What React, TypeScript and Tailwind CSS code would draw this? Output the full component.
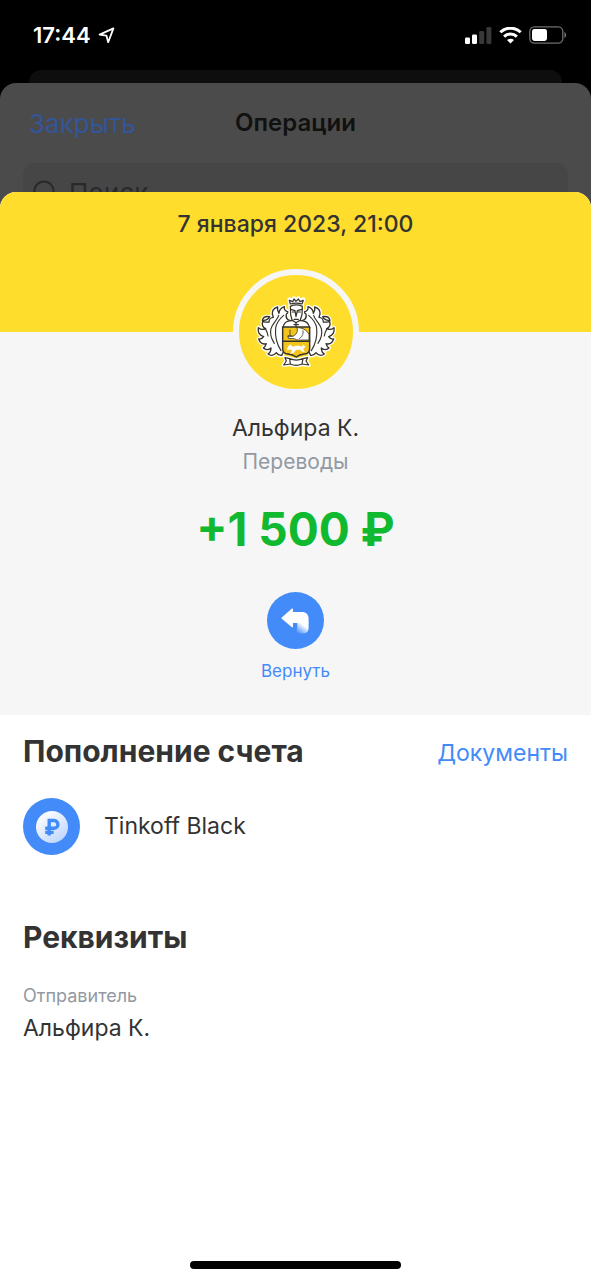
import {useState} from "react";

interface Operation {
    date: string;
    sender: string;
    category: string;
    amount: string;
    account: string;
}

const operation: Operation = {
    date: "7 января 2023, 21:00",
    sender: "Альфира К.",
    category: "Переводы",
    amount: "+1 500 ₽",
    account: "Tinkoff Black",
};

// ---------------------------------------
// ICONS
// ---------------------------------------
function LocationIcon() {
    return (
        <svg width="17" height="17" viewBox="0 0 17 17" fill="none" stroke="white" strokeWidth="1.8" strokeLinejoin="round">
            <path d="M15.4 1.4 1.6 7.6 8.4 8.6 10.2 15.2Z"/>
        </svg>
    );
}

function SignalIcon() {
    return (
        <svg width="27" height="17" viewBox="0 0 27 17" fill="white">
            <rect x="0" y="10.5" width="5" height="6.5" rx="1.2"/>
            <rect x="7" y="7.5" width="5" height="9.5" rx="1.2"/>
            <rect x="14.2" y="4" width="5" height="13" rx="1.2" fill="#383838"/>
            <rect x="21.4" y="0" width="5" height="17" rx="1.2" fill="#383838"/>
        </svg>
    );
}

function WifiIcon() {
    return (
        <svg width="23" height="17" viewBox="0 0 23 17" fill="none" stroke="white" strokeWidth="3">
            <path d="M1.3 5.3a14.6 14.6 0 0 1 20.4 0"/>
            <path d="M5.1 9.6a9.2 9.2 0 0 1 12.8 0"/>
            <path d="M11.5 16.6 8 13.1a5 5 0 0 1 7 0Z" fill="white" stroke="none"/>
        </svg>
    );
}

function BatteryIcon() {
    return (
        <svg width="38" height="18" viewBox="0 0 38 18">
            <rect x="0.8" y="0.8" width="33" height="16.4" rx="4.6" fill="none" stroke="#6f6f6f" strokeWidth="1.3"/>
            <rect x="3" y="3" width="15" height="12" rx="2.4" fill="white"/>
            <path d="M35.4 6v6c2.4-.8 2.4-5.2 0-6Z" fill="#6f6f6f"/>
        </svg>
    );
}

function SearchIcon() {
    return (
        <svg width="24" height="24" viewBox="0 0 24 24" fill="none" stroke="#29292b" strokeWidth="2">
            <circle cx="11" cy="11" r="9.6"/>
            <path d="m18 18 5 5"/>
        </svg>
    );
}

function ReturnIcon() {
    return (
        <svg width="28" height="26" viewBox="0 0 28 26">
            <defs>
                <linearGradient id="tail" x1="23.5" y1="14.5" x2="16" y2="25" gradientUnits="userSpaceOnUse">
                    <stop offset="0.2" stopColor="white"/>
                    <stop offset="1" stopColor="white" stopOpacity="0"/>
                </linearGradient>
            </defs>
            <path d="M.8 9.4 10.6.7c.7-.6 1.4-.3 1.4.6V4h9c4 0 6.6 2.6 6.6 6.6V15H12v3.5c0 .9-.7 1.2-1.4.6L.8 10.8c-.5-.4-.5-1 0-1.4Z" fill="white"/>
            <path d="M16 14.400H27.600V20c0 3.600-2 5.400-5 5.400H14c2-2.600 2.800-6 2-11Z" fill="url(#tail)"/>
        </svg>
    );
}

function RubleIcon() {
    return (
        <svg width="32" height="32" viewBox="0 0 32 32">
            <defs>
                <linearGradient id="coin" x1="6" y1="2" x2="26" y2="30" gradientUnits="userSpaceOnUse">
                    <stop offset="0" stopColor="white"/>
                    <stop offset="1" stopColor="#bfd6fd"/>
                </linearGradient>
            </defs>
            <circle cx="16" cy="16" r="16" fill="url(#coin)"/>
            <path d="M13.2 24.500V9.500H18a3.900 3.900 0 0 1 0 7.800H9.200M9.200 21.400h8.400" fill="none" stroke="#428bf9" strokeWidth="3.4"/>
        </svg>
    );
}

// Left side of the helmet's foliage, the right side is mirrored
const FOLIAGE =
    "M118 92C108 90 104 82 106 72L115 66C104 66 98 58 100 50C90 54 84 60 84 70C80 64 78 58 80 51C70 54 63 62 64 72L67 82C60 82 54 88 54 96C48 96 40 98 35 94C32 104 36 112 44 116C36 120 28 118 22 113C20 126 26 136 38 140C34 146 28 148 23 147C27 158 36 164 46 161C44 168 42 171 37 174C44 181 54 180 60 174C60 184 56 189 51 192C60 199 70 196 76 188C80 194 86 197 92 196L100 180L96 112Z";

function CrestHalf() {
    return (
        <g strokeLinecap="round" strokeLinejoin="round">
            <path d={FOLIAGE} fill="white" stroke="white" strokeWidth="12"/>
            <path d="M34 91C36 82 44 78 56 80C52 88 44 92 34 91Z" fill="white" stroke="white" strokeWidth="10"/>
            <path d={FOLIAGE} fill="white" stroke="#35322b" strokeWidth="4"/>
            <path d="M34 91C36 82 44 78 56 80C52 88 44 92 34 91Z" fill="white" stroke="#35322b" strokeWidth="4"/>
            <path
                d="M98 76C84 88 76 100 74 114C72 134 76 160 90 182M83 76C80 90 64 100 60 116C56 132 62 148 70 160M44 118C48 124 50 132 51 138"
                fill="none"
                stroke="#35322b"
                strokeWidth="3.4"
            />
        </g>
    );
}

function CrestLogo() {
    return (
        <svg width="90" height="85" viewBox="0 0 270 255" role="img" aria-label="Тинькофф">
            <CrestHalf/>
            <g transform="translate(271 0) scale(-1 1)">
                <CrestHalf/>
            </g>
            <g stroke="#35322b" strokeWidth="3.6" strokeLinejoin="round" strokeLinecap="round">
                {/* Ribbon */}
                <path d="M102 203 116 206C128 211 144 211 156 206L170 203 165 213 173 225 153 222C142 227 129 227 118 222L98 225 106 213Z" fill="white" stroke="white" strokeWidth="12"/>
                <path d="M102 203 116 206C128 211 144 211 156 206L170 203 165 213 173 225 153 222C142 227 129 227 118 222L98 225 106 213ZM116 206l2 16M156 206l-3 16" fill="white"/>
                {/* Crown and helmet */}
                <path d="M118 42 115 28 125 34 129 25 135 33 142 25 147 34 157 28 153 42 153 80 118 80Z" fill="white" stroke="white" strokeWidth="12"/>
                <path d="M118 42 115 31 125 35 129 27 135 34 142 27 147 35 157 31 153 42C142 39 129 39 118 42Z" fill="white"/>
                <path d="M96 113C98 99 109 92 121 92L150 92C163 92 173 100 176 113Z" fill="white"/>
                <path d="M118 49C129 44 143 44 154 49L153 74 148 90 135 98 123 90 119 74Z" fill="white"/>
                <path d="M119 58 132 62 135 80 139 62 153 58M124 66h7M141 66h7M129 88h13M135 98v12M129 104h13" fill="none"/>
                {/* Shield */}
                <path d="M95 111H176V176C176 187 170 191 160 192C148 193 142 196 136 201C129 196 123 193 111 192C101 191 95 187 95 176Z" fill="#f3c51c" strokeWidth="4.4"/>
                <path d="M95 154H176" fill="none" strokeWidth="4.4"/>
                <path d="M138 113C150 112 168 118 174 134V150H154C146 151 137 151 130 146L112 145 111 138 126 139C136 134 142 124 138 113Z" fill="white" strokeWidth="2.4"/>
                <path d="M156 122C158 134 152 142 144 147M117 138V120M111 138h12" fill="none" strokeWidth="2.4"/>
                <path d="M110 174 117 164 125 171C136 166 147 168 153 172C155 162 160 165 162 171L155 177 160 185 152 183 147 178 134 179 128 188 119 190 125 181 116 177 111 180Z" fill="white" stroke="white" strokeWidth="2"/>
            </g>
        </svg>
    );
}

// ---------------------------------------
// SCREEN PARTS
// ---------------------------------------
function StatusBar() {
    return (
        <div className="flex h-[70px] shrink-0 items-center justify-between pl-[33px] pr-6 text-white">
            <div className="flex items-center gap-[7px]">
                <span className="text-[22px] font-semibold">17:44</span>
                <LocationIcon/>
            </div>
            <div className="flex items-center gap-[7px]">
                <SignalIcon/>
                <WifiIcon/>
                <BatteryIcon/>
            </div>
        </div>
    );
}

function OperationsSheet() {
    const [query, setQuery] = useState("");

    return (
        <div className="h-[125px] shrink-0 overflow-hidden rounded-t-2xl bg-[#4b4b4b]">
            <div className="grid h-20 grid-cols-3 items-center px-[29px]">
                <button type="button" className="justify-self-start text-[26px] text-[#34559a]">
                    Закрыть
                </button>
                <h1 className="text-center text-2xl font-semibold text-[#111111]">Операции</h1>
            </div>
            <label className="mx-[23px] flex h-[58px] items-center gap-3 rounded-xl bg-[#464646] px-[10px]">
                <SearchIcon/>
                <input
                    type="text"
                    aria-label="Поиск"
                    placeholder="Поиск"
                    value={query}
                    onChange={(e) => setQuery(e.target.value)}
                    className="min-w-0 flex-1 bg-transparent text-[26px] outline-none placeholder:text-[#29292b]"
                />
            </label>
        </div>
    );
}

export default function App() {
    return (
        <div className="flex min-h-screen flex-col bg-black font-['Inter',sans-serif] text-[#333333]">
            <StatusBar/>
            <div className="mx-[29px] h-[13px] shrink-0 rounded-t-xl bg-[#0e0e0e]"/>
            <OperationsSheet/>

            <main className="relative -mt-4 flex flex-1 flex-col overflow-hidden rounded-t-2xl bg-white">
                <header className="h-[140px] bg-[#ffdd2d] pt-4 text-center">
                    <time dateTime="2023-01-07T21:00" className="text-[23px] leading-8 font-medium">
                        {operation.date}
                    </time>
                </header>

                {/* Summary */}
                <section className="flex h-[383px] flex-col items-center bg-[#f6f6f6]">
                    <div className="-mt-[63px] flex size-[126px] shrink-0 items-center justify-center rounded-full border-6 border-[#f6f6f6] bg-[#ffdd2d]">
                        <CrestLogo/>
                    </div>
                    <p className="mt-[15px] text-[23px] leading-9">{operation.sender}</p>
                    <p className="text-[21px] leading-8 text-[#9299a2]">{operation.category}</p>
                    <p className="mt-[27px] text-[46px] leading-12 font-bold text-[#10b92f]">{operation.amount}</p>
                    <button type="button" className="mt-[39px] flex flex-col items-center gap-2 text-[#428bf9]">
                        <span className="flex size-[57px] items-center justify-center rounded-full bg-[#428bf9]">
                            <ReturnIcon/>
                        </span>
                        <span className="text-[17px] leading-7">Вернуть</span>
                    </button>
                </section>

                {/* Account */}
                <section className="px-[23px] pt-4">
                    <div className="flex items-end justify-between">
                        <h2 className="text-[30px] leading-10 font-bold">Пополнение счета</h2>
                        <a href="#documents" className="text-[23px] leading-9 text-[#428bf9]">Документы</a>
                    </div>
                    <div className="mt-[27px] flex items-center gap-6">
                        <span className="flex size-[57px] items-center justify-center rounded-full bg-[#428bf9]">
                            <RubleIcon/>
                        </span>
                        <span className="text-[23px]">{operation.account}</span>
                    </div>
                </section>

                {/* Requisites */}
                <section className="px-[23px] pt-[62px]">
                    <h2 className="text-[30px] leading-10 font-bold">Реквизиты</h2>
                    <dl className="mt-[25px]">
                        <dt className="text-[18px] leading-7 text-[#9299a2]">Отправитель</dt>
                        <dd className="text-[23px] leading-9">{operation.sender}</dd>
                    </dl>
                </section>

                {/* Home indicator */}
                <div className="mx-auto mt-auto mb-[11px] h-2 w-[211px] rounded-full bg-black"/>
            </main>
        </div>
    );
}
